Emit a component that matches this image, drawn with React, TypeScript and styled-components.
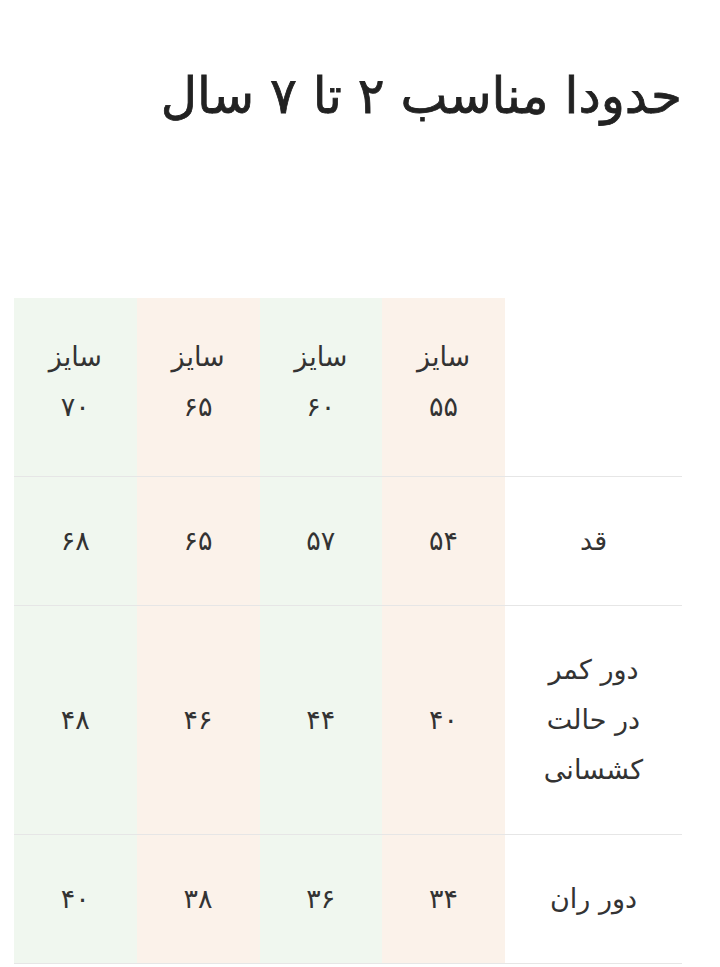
import styled, { createGlobalStyle } from 'styled-components';

const GlobalStyle = createGlobalStyle`
  html, body {
    margin: 0;
    padding: 0;
    background: #ffffff;
  }
  body {
    font-family: 'DejaVu Sans', 'Noto Sans', sans-serif;
    color: #333333;
  }
`;

const colors = {
  peach: '#fbf2ea',
  green: '#f0f7ef',
  line: '#e6e6e6',
  text: '#333333',
  title: '#222222',
};

const Page = styled.div`
  direction: rtl;
  width: 720px;
  padding: 60px 38px 0 14px;
  box-sizing: border-box;
`;

const Title = styled.h2`
  margin: 0;
  font-size: 50px;
  font-weight: 400;
  -webkit-text-stroke: 0.8px ${colors.title};
  line-height: 72px;
  color: ${colors.title};
`;

const SizeTable = styled.table`
  margin-top: 166px;
  width: 668px;
  border-collapse: collapse;
  table-layout: fixed;
`;

const LabelCol = styled.col`
  width: 177px;
`;

const ValueCol = styled.col`
  width: 122.75px;
`;

const Row = styled.tr`
  border-bottom: 1px solid ${colors.line};
`;

const Cell = styled.td<{ $tone?: 'peach' | 'green' }>`
  background: ${p => (p.$tone ? colors[p.$tone] : 'transparent')};
  text-align: center;
  vertical-align: middle;
  padding: 39px 8px;
  font-size: 27px;
  line-height: 50px;
  color: ${colors.text};
`;

const HeadCell = styled(Cell)`
  padding: 34px 8px 44px;
`;

const tones: ('peach' | 'green')[] = ['peach', 'green', 'peach', 'green'];

const sizes = ['۵۵', '۶۰', '۶۵', '۷۰'];

const rows = [
  { label: ['قد'], values: ['۵۴', '۵۷', '۶۵', '۶۸'] },
  { label: ['دور کمر', 'در حالت', 'کشسانی'], values: ['۴۰', '۴۴', '۴۶', '۴۸'] },
  { label: ['دور ران'], values: ['۳۴', '۳۶', '۳۸', '۴۰'] },
];

export default function App() {
  return (
    <>
      <GlobalStyle />
      <Page>
        <Title>حدودا مناسب ۲ تا ۷ سال</Title>
        <SizeTable>
          <colgroup>
            <LabelCol />
            <ValueCol />
            <ValueCol />
            <ValueCol />
            <ValueCol />
          </colgroup>
          <tbody>
            <Row>
              <HeadCell />
              {sizes.map((s, i) => (
                <HeadCell key={s} $tone={tones[i]}>
                  سایز
                  <br />
                  {s}
                </HeadCell>
              ))}
            </Row>
            {rows.map(r => (
              <Row key={r.label.join(' ')}>
                <Cell>
                  {r.label.map((l, i) => (
                    <span key={l}>
                      {i > 0 && <br />}
                      {l}
                    </span>
                  ))}
                </Cell>
                {r.values.map((v, i) => (
                  <Cell key={i} $tone={tones[i]}>
                    {v}
                  </Cell>
                ))}
              </Row>
            ))}
          </tbody>
        </SizeTable>
      </Page>
    </>
  );
}
